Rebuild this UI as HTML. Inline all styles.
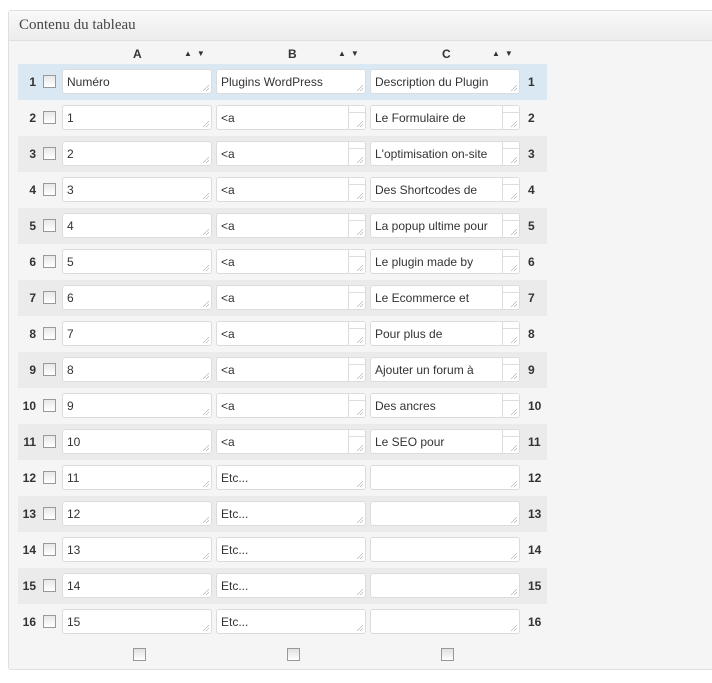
<!DOCTYPE html>
<html><head><meta charset="utf-8"><style>
body{margin:0;background:#fff;width:712px;height:683px;overflow:hidden;font-family:"Liberation Sans",Arial,sans-serif;font-size:12px;color:#333}
.box{position:absolute;left:8px;top:10px;width:720px;height:658px;border:1px solid #dfdfdf;border-radius:3px;background:#f5f5f5}
.hd{height:29px;border-bottom:1px solid #dfdfdf;background:linear-gradient(#f9f9f9,#ececec);font-family:"Liberation Serif",Georgia,serif;font-size:15px;color:#464646;line-height:29px;padding-left:10px}
.colh{position:absolute;top:47px;font-weight:bold;font-size:12px;color:#333}
.arr{position:absolute;top:49px;font-size:8px;color:#333;letter-spacing:5px}
.row{position:absolute;left:18px;width:529px;height:36px}
.n{position:absolute;width:18px;text-align:right;font-weight:bold;top:11px;font-size:12px}
.cb{position:absolute;left:25px;top:11px;width:11px;height:11px;border:1px solid #999;background:linear-gradient(#e8e8e8,#fff)}
.ta{position:absolute;top:5px;width:150px;height:25px;background:#fff;border:1px solid #dcdcdc;border-radius:3px;box-sizing:border-box;padding:5px 4px 0;font-size:12px;color:#333;overflow:hidden;white-space:nowrap}
.ta:after{content:"";position:absolute;right:2px;bottom:2px;width:6px;height:6px;background:linear-gradient(135deg,transparent 45%,#999 50%,transparent 55%,transparent 70%,#999 75%,transparent 80%)}
.sb{position:absolute;right:0;top:0;width:16px;height:23px;border-left:1px solid #ddd;background:#fff}
.sb:before{content:"";position:absolute;left:0;right:0;top:6px;border-top:1px solid #ddd}
.bcb{position:absolute;top:648px;width:11px;height:11px;border:1px solid #999;background:linear-gradient(#e0e0e0,#fff)}
</style></head><body>
<div class="box"><div class="hd">Contenu du tableau</div></div>
<div class="colh" style="left:133px">A</div><div class="arr" style="left:184px">▲▼</div>
<div class="colh" style="left:288px">B</div><div class="arr" style="left:338px">▲▼</div>
<div class="colh" style="left:442px">C</div><div class="arr" style="left:492px">▲▼</div>
<div id="rows"></div>
<div class="bcb" style="left:133px"></div><div class="bcb" style="left:287px"></div><div class="bcb" style="left:441px"></div>
<script>
var C=["Description du Plugin","Le Formulaire de","L'optimisation on-site","Des Shortcodes de","La popup ultime pour","Le plugin made by","Le Ecommerce et","Pour plus de","Ajouter un forum à","Des ancres","Le SEO pour","","","","",""];
var h="";
for(var i=0;i<16;i++){
 var bg=i==0?"#d9e8f3":(i%2==0?"#ebebeb":"transparent");
 var a=i==0?"Numéro":String(i), b=i==0?"Plugins WordPress":(i<=10?"&lt;a":"Etc...");
 var sb=(i>=1&&i<=10)?'<div class="sb"></div>':'';
 h+='<div class="row" style="top:'+(64+i*36)+'px;background:'+bg+'">'+
 '<div class="n" style="left:0">'+(i+1)+'</div><div class="cb"></div>'+
 '<div class="ta" style="left:44px">'+a+'</div>'+
 '<div class="ta" style="left:198px">'+b+sb+'</div>'+
 '<div class="ta" style="left:352px">'+C[i]+sb+'</div>'+
 '<div class="n" style="left:510px;text-align:left">'+(i+1)+'</div></div>';
}
document.getElementById("rows").innerHTML=h;
</script>
</body></html>
